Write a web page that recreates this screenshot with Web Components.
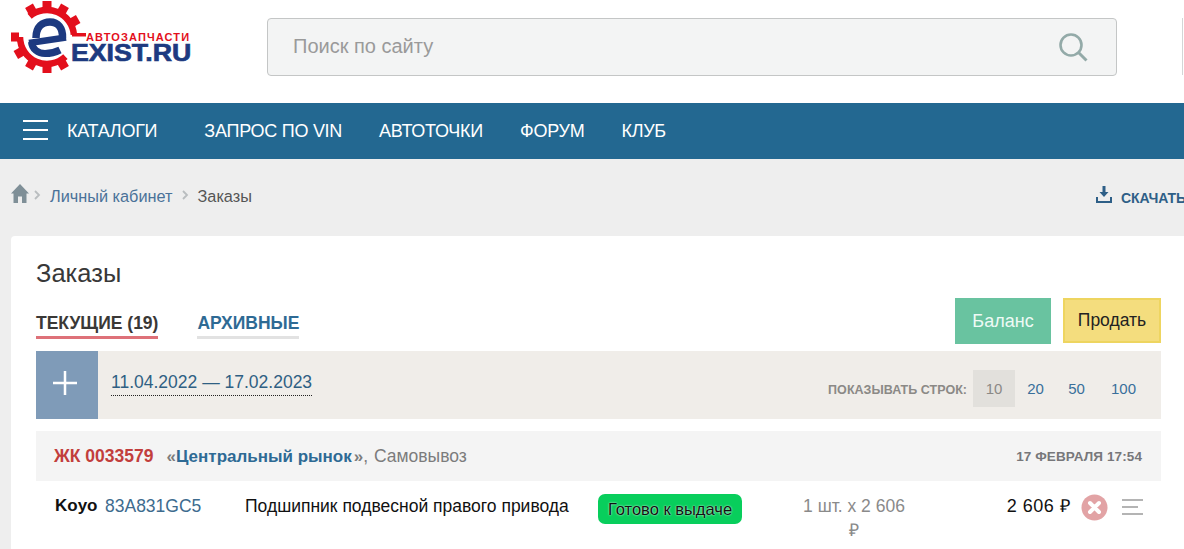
<!DOCTYPE html>
<html lang="ru"><head><meta charset="utf-8"><title>Заказы</title>
<style>
html,body{margin:0;padding:0;overflow:hidden;height:549px;background:#eee}
body{font-family:"Liberation Sans",Arial,sans-serif;width:1184px}
</style></head><body>
<site-header></site-header>
<main-nav></main-nav>
<bread-crumbs></bread-crumbs>
<orders-card></orders-card>
<script>
function def(name, html){
  customElements.define(name, class extends HTMLElement{
    constructor(){super();this.attachShadow({mode:'open'}).innerHTML=html;}
  });
}
const teeth=[-30,0,30,60,150,180,-150,-120,-90].map(a=>`<rect x="-4.500" y="-36" width="9" height="8" transform="translate(47 37) rotate(${a})"/>`).join('');
def('site-logo',`<style>
:host{display:block;width:190px;height:74px;position:relative}
svg{position:absolute;left:0;top:0}
.a{position:absolute;left:86px;top:33px;font:bold 11px/8px "Liberation Sans",sans-serif;color:#e30f1c;letter-spacing:1.120px;white-space:nowrap}
.b{position:absolute;left:71px;top:44px;font:bold 24.500px/18px "Liberation Sans",sans-serif;color:#1d3a80;white-space:nowrap;-webkit-text-stroke:.7px #1d3a80;transform:scaleX(1.090);transform-origin:0 0}
</style>
<svg width="90" height="74" viewBox="0 0 90 74">
<g fill="#e30f1c">${teeth}<path d="M72 33h14v3.500H72z"/></g>
<path d="M29.600 16.300A27 27 0 0 1 73.900 34.600M20 37A27 27 0 0 0 65.400 56.700" fill="none" stroke="#e30f1c" stroke-width="6.500"/>
<g fill="none" stroke="#1d3a80">
<path d="M29 43L66 37.500" stroke-width="6.500"/>
<path d="M36 38C36 26 43 22 50 22C58 22 63 28 62.500 38" stroke-width="7.500"/>
<path d="M31.500 42C32 49 38 53.500 45 53.500C50 53.500 55 52.500 60 50" stroke-width="7"/>
</g>
</svg>
<span class="a">АВТОЗАПЧАСТИ</span><span class="b">EXIST.RU</span>`);

def('search-box',`<style>
:host{display:flex;align-items:center;box-sizing:border-box;width:850px;height:58px;background:#f3f4f4;border:1px solid #c4c6c6;border-radius:4px;padding:0 28px 2px 25px;justify-content:space-between;color:#9a9a9a;font-size:20px}
svg{display:block;margin-top:4px}
</style><span>Поиск по сайту</span>
<svg width="30" height="30" viewBox="0 0 30 30" fill="none" stroke="#93aaa8" stroke-width="2.600"><circle cx="13" cy="12" r="10.500"/><path d="M20.500 19.500l8 8" stroke-width="3"/></svg>`);

def('site-header',`<style>
:host{display:flex;height:103px;background:#fff;align-items:flex-start;position:relative;overflow:hidden}
search-box{margin:18px 0 0 77px}
.edge{margin:18px 0 0 65px;width:1px;height:57px;background:#d4d6d6;flex:none}
</style><site-logo></site-logo><search-box></search-box><div class="edge"></div>`);

def('main-nav',`<style>
:host{display:flex;height:56px;background:#236891;align-items:center;color:#fff;font-size:18px;letter-spacing:-.26px;white-space:nowrap}
.burger{width:25px;height:20px;margin:-2px 19px 0 23px;display:flex;flex-direction:column;justify-content:space-between}
.burger i{display:block;height:2px;background:#fff}
span{margin-right:37px}
.k{margin-right:47px}
</style><div class="burger"><i></i><i></i><i></i></div><span class="k">КАТАЛОГИ</span><span>ЗАПРОС ПО VIN</span><span>АВТОТОЧКИ</span><span>ФОРУМ</span><span>КЛУБ</span>`);

def('bread-crumbs',`<style>
:host{display:flex;height:77px;background:#eee;align-items:center;font-size:16.300px;color:#555;white-space:nowrap;overflow:hidden;position:relative;padding:0 0 2px 11px;box-sizing:border-box}
a{color:#4a7299}
.sep{display:block}
.home{display:block;margin-top:-7px}
.sp{flex:1}
.dl{display:flex;align-items:center;color:#2e5f87;font-weight:bold;font-size:14px;letter-spacing:-.1px;width:88px;flex:none;margin-top:2px}
.dl svg{margin:-7px 9px 0 0;flex:none}
</style>
<svg class="home" width="18" height="19" viewBox="0 0 18 19" fill="#7f8f97"><path d="M9 0L0 9.500h2.500V19h4.500v-6.500h4V19h4.500V9.500H18z"/></svg>
<svg class="sep" width="7" height="10" viewBox="0 0 7 10" fill="none" stroke="#b9bdbf" stroke-width="1.800" style="margin:-3px 9px 0 5px"><path d="M1 1l4 4-4 4"/></svg>
<a>Личный кабинет</a>
<svg class="sep" width="7" height="10" viewBox="0 0 7 10" fill="none" stroke="#b9bdbf" stroke-width="1.800" style="margin:-3px 9px 0 9px"><path d="M1 1l4 4-4 4"/></svg>
<span>Заказы</span><span class="sp"></span>
<span class="dl"><svg width="16" height="17" viewBox="0 0 16 17" fill="#2e5f87"><path d="M6.500 0h3v6h3l-4.500 5-4.500-5h3z"/><path d="M0 11h2v4h12v-4h2v6H0z"/></svg>СКАЧАТЬ</span>`);

def('action-btn',`<style>
:host{display:flex;box-sizing:border-box;align-items:center;justify-content:center;height:46px;font-size:17.500px}
:host([kind=g]){width:96px;background:#69c3a0;color:#eefaf5;font-size:18px}
:host([kind=y]){width:98px;height:45px;background:#f4dd7e;border:2px solid #eed560;color:#222}
</style><slot></slot>`);

def('order-tabs',`<style>
:host{display:flex;font-weight:bold;font-size:17.500px;line-height:19px;gap:39px;align-self:flex-end}
span{display:block;border-bottom:3px solid;padding-bottom:3px;margin-bottom:12px}
.a{color:#3a3836;border-color:#de7179}
.b{color:#2e6a94;border-color:#e2e2e2}
</style><span class="a">ТЕКУЩИЕ (19)</span><span class="b">АРХИВНЫЕ</span>`);

def('filter-bar',`<style>
:host{display:flex;height:68px;background:#f0ede9;align-items:stretch}
.plus{width:62px;background:#7f9bb8;display:flex;align-items:center;justify-content:center;flex:none}
.plus svg{display:block;margin:-4px 0 0 -4px}
.d{margin:21px 0 0 13px;align-self:flex-start;font-size:17.500px;line-height:20px;color:#2f5f83;border-bottom:1px dotted #222;padding-bottom:3px}
.sp{flex:1}
.rows{display:flex;align-items:center;margin:19px 15px 0 0;align-self:flex-start;height:37px;font-size:15px;color:#396f9b}
.l{font-size:12.500px;font-weight:bold;color:#8b8986;margin-right:6px;letter-spacing:.03px;margin-top:2px}
.rows b{font-weight:normal;display:flex;height:37px;align-items:center;justify-content:center;width:42px}
.rows b.on{background:#e2e0dc;color:#8b8986}
.rows b.n{width:41px}
.rows b.h{width:45px;margin-left:4px}
</style><div class="plus"><svg width="26" height="26" viewBox="0 0 26 26" stroke="#fff" stroke-width="2.500"><path d="M13 1v24M1 13h24"/></svg></div>
<span class="d">11.04.2022 — 17.02.2023</span><span class="sp"></span>
<div class="rows"><span class="l">ПОКАЗЫВАТЬ СТРОК:</span><b class="on">10</b><b class="n">20</b><b class="n">50</b><b class="h">100</b></div>`);

def('order-head',`<style>
:host{display:flex;height:50px;background:#f4f4f4;align-items:center;padding:0 19px 0 18px;font-size:17.500px;color:#7c7c7c;white-space:nowrap;margin-top:12px}
.n{color:#c23e3c;font-weight:bold;margin-right:13px}
.p{font-weight:bold;color:#2e6a94;font-size:17px}
.q{font-weight:bold;color:#7c7c7c;font-size:17px}
.e{margin-left:2px}
.w{margin-left:1px}
.sp{flex:1}
.t{font-size:13.500px;font-weight:bold;color:#77777a;letter-spacing:.1px}
</style><span class="n">ЖК 0033579</span><span><span class="q">«</span><span class="p">Центральный рынок</span><span class="q e">»</span>,<span class="w"> Самовывоз</span></span><span class="sp"></span><span class="t">17 ФЕВРАЛЯ 17:54</span>`);

def('order-row',`<style>
:host{display:flex;align-items:flex-start;font-size:17.500px;line-height:24px;color:#111;padding:13px 0 0 19px;white-space:nowrap}
.br{font-weight:bold;width:50px;flex:none;font-size:17px}
.code{color:#3d6b8e;width:140px;flex:none}
.name{width:353px;flex:none}
.st{flex:none;width:144px;height:30px;background:#08ce5c;border-radius:7px;font-size:16.500px;line-height:30px;text-align:center;color:#111;text-shadow:0 0 2px #fff;margin-right:57px}
.qty{flex:none;width:110px;text-align:center;color:#8a8a8a;white-space:normal}
.sum{flex:none;width:161px;text-align:right;font-size:18px;letter-spacing:.45px;color:#111}
.x{flex:none;margin:0 0 0 11px;display:block}
.m{flex:none;margin:5px 0 0 14px;display:block}
</style><span class="br">Koyo</span><span class="code">83A831GC5</span><span class="name">Подшипник подвесной правого привода</span><span class="st">Готово к выдаче</span><span class="qty">1 шт. х 2 606 ₽</span><span class="sum">2 606 ₽</span>
<svg class="x" width="27" height="27" viewBox="0 0 27 27"><circle cx="13.500" cy="13.500" r="13" fill="#e2a3a5"/><path d="M9 9l9 9M18 9l-9 9" stroke="#fff" stroke-width="4" stroke-linecap="round"/></svg>
<svg class="m" width="21" height="16" viewBox="0 0 21 16" fill="#b4b4b4"><rect width="21" height="2"/><rect y="7" width="16" height="2"/><rect y="14" width="21" height="2"/></svg>`);

def('orders-card',`<style>
:host{display:block;box-sizing:border-box;margin-left:11px;width:1175px;height:313px;overflow:hidden;background:#fff;border-radius:4px 0 0 0;padding:24px 25px 0;color:#333}
h1{margin:0;font-weight:normal;font-size:25.500px;line-height:26px;color:#383838}
.top{display:flex;height:53px;margin-top:12px;align-items:flex-start}
.sp{flex:1}
action-btn{margin-left:12px}
</style><h1>Заказы</h1>
<div class="top"><order-tabs></order-tabs><span class="sp"></span><action-btn kind="g">Баланс</action-btn><action-btn kind="y">Продать</action-btn></div>
<filter-bar></filter-bar><order-head></order-head><order-row></order-row>`);
</script>
</body></html>
